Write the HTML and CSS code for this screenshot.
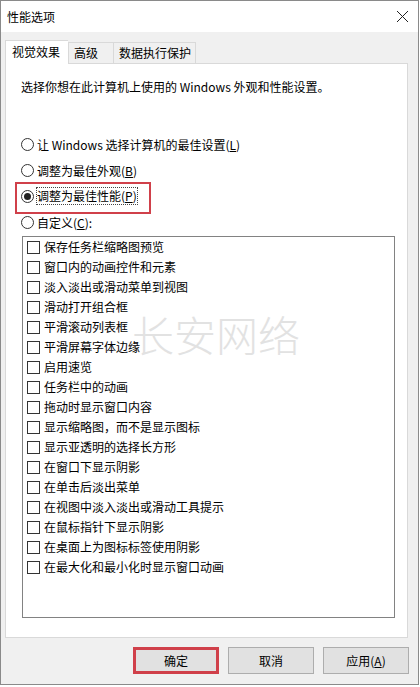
FILE: index.html
```html
<!DOCTYPE html>
<html lang="zh">
<head>
<meta charset="utf-8">
<link rel="stylesheet" href="styles.css">
</head>
<body>
<div class="window">
  <div class="titlebar">
    <span class="title">性能选项</span>
    <svg class="close" width="13" height="13" viewBox="0 0 13 13"><path d="M1 1 L12 12 M12 1 L1 12" stroke="#222" stroke-width="1" fill="none"/></svg>
  </div>
  <div class="body">
    <div class="tabs">
      <div class="tab active">视觉效果</div>
      <div class="tab">高级</div>
      <div class="tab wide">数据执行保护</div>
    </div>
    <div class="panel">
      <p class="desc">选择你想在此计算机上使用的 Windows 外观和性能设置。</p>
      <div class="radios">
        <div class="radio"><span class="dot"></span><span>让 Windows 选择计算机的最佳设置(<u>L</u>)</span></div>
        <div class="radio"><span class="dot"></span><span>调整为最佳外观(<u>B</u>)</span></div>
        <div class="radio marked"><span class="dot on"></span><span class="focus">调整为最佳性能(<u>P</u>)</span></div>
        <div class="radio"><span class="dot"></span><span>自定义(<u>C</u>):</span></div>
      </div>
      <div class="list">
        <div class="item"><span class="box"></span>保存任务栏缩略图预览</div>
        <div class="item"><span class="box"></span>窗口内的动画控件和元素</div>
        <div class="item"><span class="box"></span>淡入淡出或滑动菜单到视图</div>
        <div class="item"><span class="box"></span>滑动打开组合框</div>
        <div class="item"><span class="box"></span>平滑滚动列表框</div>
        <div class="item"><span class="box"></span>平滑屏幕字体边缘</div>
        <div class="item"><span class="box"></span>启用速览</div>
        <div class="item"><span class="box"></span>任务栏中的动画</div>
        <div class="item"><span class="box"></span>拖动时显示窗口内容</div>
        <div class="item"><span class="box"></span>显示缩略图，而不是显示图标</div>
        <div class="item"><span class="box"></span>显示亚透明的选择长方形</div>
        <div class="item"><span class="box"></span>在窗口下显示阴影</div>
        <div class="item"><span class="box"></span>在单击后淡出菜单</div>
        <div class="item"><span class="box"></span>在视图中淡入淡出或滑动工具提示</div>
        <div class="item"><span class="box"></span>在鼠标指针下显示阴影</div>
        <div class="item"><span class="box"></span>在桌面上为图标标签使用阴影</div>
        <div class="item"><span class="box"></span>在最大化和最小化时显示窗口动画</div>
      </div>
    </div>
    <div class="buttons">
      <button class="btn ok">确定</button>
      <button class="btn">取消</button>
      <button class="btn">应用(<u>A</u>)</button>
    </div>
  </div>
  <div class="watermark">长安网络</div>
</div>
</body>
</html>
```
FILE: styles.css
```css
* { box-sizing: border-box; }
html, body { margin: 0; padding: 0; background: #fff; }
body {
  width: 420px;
  height: 687px;
  font-family: "Noto Sans CJK SC", "Liberation Sans", sans-serif;
  font-size: 12px;
  color: #000;
}
.window {
  position: relative;
  width: 419px;
  height: 685px;
  border: 1px solid #8a8a8a;
  background: #f0f0f0;
  display: flex;
  flex-direction: column;
}
.titlebar {
  height: 31px;
  background: #fff;
  display: flex;
  align-items: center;
  justify-content: space-between;
  padding: 0 9px 0 6px;
}
.title { line-height: 16px; }
.close { display: block; }
.body {
  flex: 1;
  display: flex;
  flex-direction: column;
  padding: 8px 9px 0 4px;
}
.tabs {
  display: flex;
  align-items: flex-end;
  height: 23px;
  position: relative;
  z-index: 1;
}
.tab {
  height: 21px;
  line-height: 19px;
  border: 1px solid #d9d9d9;
  border-bottom: none;
  background: #f0f0f0;
  padding: 0 5px;
  width: 46px;
  white-space: nowrap;
}
.tab.wide { width: 82px; border-left: none; }
.tab.active {
  height: 24px;
  width: 63px;
  padding: 0 6px;
  background: #fff;
  line-height: 22px;
  margin-bottom: -1px;
  border-right: none;
}
.tab.active + .tab { border-left: 1px solid #d9d9d9; }
.panel {
  width: 403px;
  height: 575px;
  background: #fff;
  border: 1px solid #d9d9d9;
  padding: 15px 0 0 15px;
}
.desc {
  margin: 0;
  line-height: 16px;
}
.radios {
  margin-top: 36px;
  display: flex;
  flex-direction: column;
}
.radio {
  position: relative;
  height: 26px;
  display: flex;
  align-items: center;
  gap: 3px;
}
.radio.marked::after {
  content: "";
  position: absolute;
  left: -6px;
  top: -1px;
  width: 132px;
  height: 28px;
  border: 2px solid #d0404a;
}
.dot {
  width: 13px;
  height: 13px;
  border: 1px solid #333;
  border-radius: 50%;
  background: #fff;
  display: flex;
  align-items: center;
  justify-content: center;
}
.dot.on::before {
  content: "";
  width: 7px;
  height: 7px;
  border-radius: 50%;
  background: #222;
}
.focus {
  outline: 1px dotted #444;
  outline-offset: 0;
  line-height: 16px;
}
u { text-decoration: underline; }
.list {
  margin: 1px 0 0 1px;
  width: 373px;
  height: 382px;
  border: 1px solid #828282;
  background: #fff;
  padding: 0 0 0 4px;
}
.item {
  height: 20px;
  display: flex;
  align-items: center;
  gap: 4px;
  line-height: 16px;
}
.box {
  width: 13px;
  height: 13px;
  border: 1px solid #333;
  background: #fff;
}
.buttons {
  display: flex;
  justify-content: flex-end;
  gap: 9px;
  padding-top: 9px;
  padding-right: 0;
}
.btn {
  width: 86px;
  height: 27px;
  font-family: "Noto Sans CJK SC", "Liberation Sans", sans-serif;
  font-size: 12px;
  color: #000;
  background: #e1e1e1;
  border: 1px solid #adadad;
  padding: 0;
}
.btn.ok { border: 3px solid #d0404a; }
.watermark {
  position: absolute;
  left: 131px;
  top: 305px;
  font-size: 42px;
  line-height: 56px;
  font-weight: 300;
  color: #e2e2e2;
  letter-spacing: 0;
  pointer-events: none;
}
```
